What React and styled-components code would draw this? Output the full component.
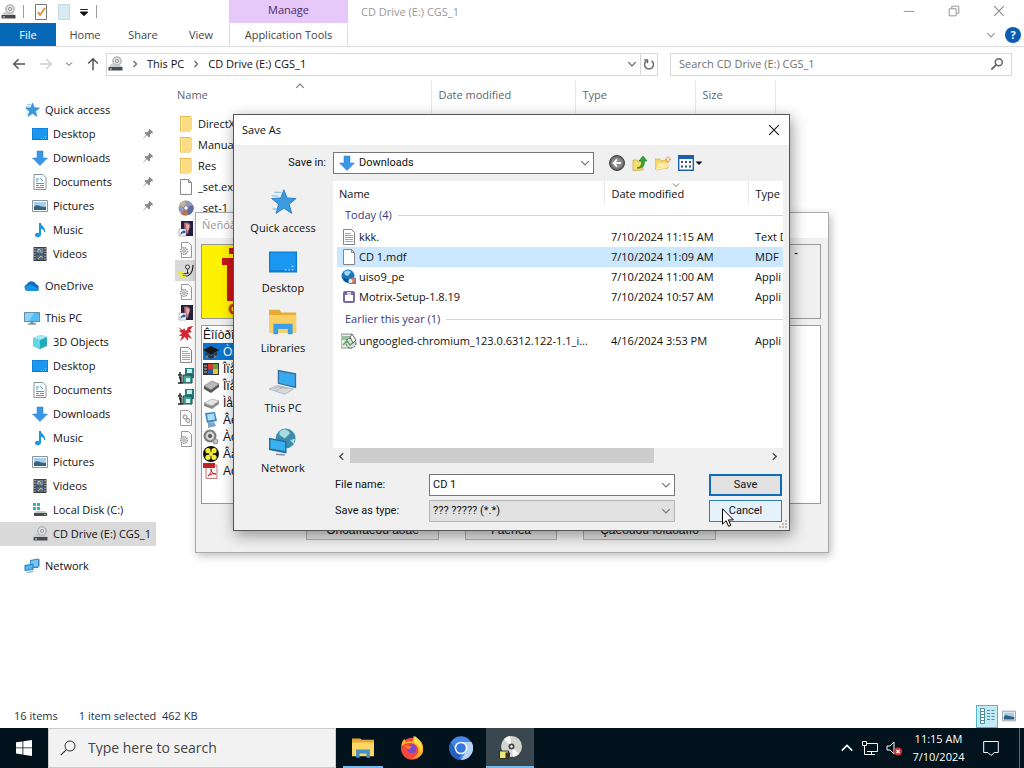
import { useState } from 'react'
import styled, { createGlobalStyle, css } from 'styled-components'

// every drawing lives on a 16x16 grid
const art = {
  star: <><path d="M8.500 1l1.800 4.700 5.200.3-4 3.300 1.500 5.200L8.500 11.500 4 14.500l1.500-5.200L1.500 6l5.200-.3z" fill="#3a9be0" stroke="#2278bd" strokeWidth=".5" /><path d="M3 2.500h4M1.500 4.500h4M2 12h2.500" stroke="#8cc6ee" strokeWidth=".8" /></>,
  desktop: <><path d="M0 2h16v12H0z" fill="#0d7bd1" /><path d="M.7 2.700h14.600v10H.7z" fill="#1c97f0" /><path d="M9 12.500h1M11 12.500h1M13 12.500h1M13 10.500h1" stroke="#9bd4fb" strokeWidth=".8" /></>,
  downloads: <path d="M5 1h6v7h4.500L8 15.500.5 8H5z" fill="#3a96e6" stroke="#2a7fca" strokeWidth=".5" />,
  document: <><path d="M2 .5h9l3 3v12H2z" fill="#fff" stroke="#8a969f" /><path d="M4 5h3M4 7h2M8 4l3 3M4 9.500h8M4 11.500h3M8 11.500h4M4 13.500h8" stroke="#4a9bd0" /></>,
  pictures: <><path d="M.5 2.500h15v11H.5z" fill="#fff" stroke="#8a969f" /><path d="M2 4h12v8H2z" fill="#a8cdea" /><path d="M2 12V9c3-4 5 0 12 0v3z" fill="#34607f" /></>,
  music: <path d="M7 1h2c0 3 5 4 4 9h-1c0-2-1-3-3-3v6c-1 3-6 3-6 .3C3 11 5 10.500 7 11z" fill="#2196dc" />,
  videos: <><path d="M1.500 1h13v14h-13z" fill="#3b3e42" /><path d="M4.500 2h7v5.500h-7z" fill="#66809c" /><path d="M4.500 8.500h7V14h-7z" fill="#3f6f9e" /><path d="M3 2v12M13 2v12" stroke="#e8e8e8" strokeDasharray="1.300 1.300" /><path d="M5 6l2-3 3 4M6 13l3-3 2 2" stroke="#d8b86a" fill="none" /></>,
  onedrive: <><path d="M3.500 13a3.500 3.500 0 01-.5-6.800A5 5 0 0112 6a3.700 3.700 0 01.5 7z" fill="#0f6cbd" /><path d="M3 13a3 3 0 01-1-5l5-1.500L15 11a2 2 0 01-2 2z" fill="#1b93e4" /></>,
  pc: <><path d="M0 2h16v10H0z" fill="#6e8ea6" /><path d="M1 3h14v8H1z" fill="#56bdf3" /><path d="M1 3h9L5 11H1z" fill="#86d5fb" /><path d="M4 14h8M7 12h2v2H7z" stroke="#8296a4" strokeWidth="1.400" /></>,
  cube: <><path d="M1 4l8-3 6 2v9l-7 3-7-3z" fill="#27a9bd" /><path d="M1 4l7 2v9l-7-3z" fill="#63d8e4" /><path d="M1 4l8-3 6 2-7 3z" fill="#a4edf1" /></>,
  disk: <><path d="M1 1h3v3H1zM5 1h3v3H5zM1 5h3v3H1zM5 5h3v3H5z" fill="#27b3c0" /><path d="M4 9h9l2 2H2z" fill="#c6cace" /><path d="M2 11h13v3H2z" fill="#464c50" /><path d="M12 12.500h2" stroke="#6fe06f" /></>,
  cd: <><circle cx="10" cy="5" r="4.200" fill="#e2e2e2" stroke="#9c9c9c" /><circle cx="10" cy="5" r="1.500" fill="#fff" stroke="#8a8a8a" /><path d="M4 8h9l2 3H2z" fill="#bfc3c5" fillOpacity=".8" /><path d="M1.500 11h14v3.500h-14z" fill="#484c50" /><path d="M3 13h2" stroke="#ddd" /></>,
  network: <><path d="M6 2l8-1.500 1.500 1V8L14 10H6z" fill="#3a86c2" /><path d="M7 3l7-1.500v7L7 9z" fill="#7cc4ee" /><path d="M.5 7l9-1.500v6.500l-9 1z" fill="#1f82c6" /><path d="M1.500 8l7-1.200v4.400l-7 .8z" fill="#54b5ed" /><path d="M3 14.500l6-1" stroke="#7591a5" /></>,
  folder: <><path d="M2 0h11v14l-1 1.500H2z" fill="#e6bd55" /><path d="M3 1h11v12l-1 2H3z" fill="#fbdc85" /><path d="M3 1h1v13H3z" fill="#fff0b8" /></>,
  page: <path d="M2.500.5h8l3 3v12h-11zM10.500.5v3h3" fill="#fff" stroke="#858585" />,
  text: <><path d="M2.500.5h8l3 3v12h-11z" fill="#fff" stroke="#858585" /><path d="M4 4.500h6M4 6.500h8M4 8.500h8M4 10.500h8M4 12.500h8" stroke="#8f8f8f" strokeWidth=".8" /></>,
  gear: <><path d="M3.500.5h7l3 3v12h-10z" fill="#fff" stroke="#9a9a9a" /><circle cx="6" cy="9" r="3.400" fill="#eee" stroke="#8c8c8c" strokeDasharray="1.500 .8" strokeWidth="1.300" /><circle cx="6" cy="9" r="1.300" fill="#fff" stroke="#999" /></>,
  gears: <><path d="M2.500.5h8l3 3v12h-11z" fill="#fff" stroke="#9a9a9a" /><circle cx="7" cy="7" r="2" fill="#eee" stroke="#8c8c8c" /><circle cx="10" cy="10.500" r="2" fill="#eee" stroke="#8c8c8c" /></>,
  discColor: <><circle cx="8" cy="8" r="7.500" fill="#9297bc" /><path d="M8 8L1 6a7 7 0 016-5.500z" fill="#c4b494" /><path d="M8 8l7-3a7 7 0 01-5 10z" fill="#5e6d9e" /><path d="M8 8L3 14a7 7 0 006 1.300z" fill="#c26d4a" /><circle cx="8" cy="8" r="2.200" fill="#fff" stroke="#7b7b9b" /></>,
  portrait: <><path d="M3 0h12v15H3z" fill="#252040" /><path d="M6 2c6-2 8 3 5 6l-1 5-3-1z" fill="#bc6f76" /><path d="M8 3l3 1v4l-2 2z" fill="#e6b3a9" /><path d="M1 8h7v7H1z" fill="#fff" stroke="#777" strokeWidth=".5" /><path d="M2.500 14c0-3 1-4 3-4V8.500L8 11l-2.500 2v-1.500z" fill="#235ab0" /></>,
  pliers: <><path d="M6 13c6 1 9-4 9-11" fill="none" stroke="#222" strokeWidth="1.200" /><circle cx="9.500" cy="4" r="2" fill="#eee" stroke="#333" /><path d="M9.500 6v5M4 11l7-1" stroke="#333" /><path d="M0 8h6v2.500H0zM2 11.500h6V14H2z" fill="#e9ee28" /><path d="M5 12.500h5" stroke="#777" /></>,
  splat: <path d="M0 1l5 3 1-2 2 3 2-4 5-1-3 4 2 2-4 1 4 6-4-2v4l-3-4-5 4 2-5-3 0 3-3-3-2 2-1z" fill="#d22735" />,
  install: <><path d="M7 0h9v10H7z" fill="#287f85" /><path d="M9 1h5v4H9z" fill="#c9f0e4" /><path d="M5 7h9v8H5z" fill="#3fa39a" stroke="#244" /><path d="M8 10h4v4H8z" fill="#d9f6ea" /><path d="M2 4v3M0 7h4M1 9h2v6M0 15h5" stroke="#222" strokeWidth="1.400" /></>,
  globe: <><circle cx="7" cy="7" r="6.500" fill="#1b78b8" /><path d="M3 3c3-2 5-2 7 0L7 7 4 6z" fill="#9fd9f5" /><path d="M2 9l5 1 1 4-4-1z" fill="#0c4c83" /><path d="M8 9h7v6H8z" fill="#6b7fa7" /><path d="M11 8l4 3-4 4z" fill="#d9785d" /><circle cx="9.500" cy="12" r="2" fill="#e5edf5" /></>,
  motrix: <><rect x="2" y="2" width="12" height="12" rx="2" fill="#7a68a0" /><path d="M4 6h8v6H4z" fill="#fff" /><path d="M6 3h4v3H6z" fill="#d9d0e6" /></>,
  chromiumSetup: <><path d="M0 1h11v14H0z" fill="#e7ede7" stroke="#6f7d72" strokeWidth=".8" /><path d="M1 3h8v4H1z" fill="#94bea1" /><circle cx="10" cy="10" r="5" fill="#dbe4dc" stroke="#39443d" strokeDasharray="2 1" /><path d="M2 12l4-4 3 4 4-3" fill="none" stroke="#5aa35a" strokeWidth="1.500" /><path d="M11 1l4 6-3 3-3-6z" fill="#f3f3f3" stroke="#444" strokeWidth=".8" /></>,
  chip: <><path d="M0 6l8-4 8 4-8 5z" fill="#191919" /><path d="M2 8v3l6 4 6-4V8l-6 4z" fill="#333" /><path d="M4 11v3M12 11v3" stroke="#d58f2e" /></>,
  winflag: <><path d="M0 2h16v12H0z" fill="#333" /><path d="M5 3h5v5H5z" fill="#cf3e2c" /><path d="M10 3h5v5h-5z" fill="#60a440" /><path d="M5 8h5v5H5z" fill="#295bb6" /><path d="M10 8h5v5h-5z" fill="#e6c536" /><path d="M1 5h3M1 8h3M1 11h3" stroke="#bbb" /></>,
  drive: <><path d="M1 8l8-5 7 3-8 6z" fill="#b9b9b9" stroke="#555" strokeWidth=".5" /><path d="M1 8l7 4v3l-7-4zM8 12l8-6v3l-8 6z" fill="#565656" /></>,
  driveLight: <><path d="M1 8l8-4 7 2-7 5z" fill="#e4e4e4" stroke="#888" strokeWidth=".5" /><path d="M1 8l8 3v3l-8-3zM9 11l7-5v3l-7 5z" fill="#8b8b8b" /></>,
  monitor: <><path d="M2 1l10-1 2 9-10 2z" fill="#4385bd" /><path d="M4 2.500l7-1 1 6-7 1z" fill="#a9def7" /><path d="M5 11l6-1 2 4-8 2z" fill="#7ba7c5" /></>,
  speaker: <><circle cx="7" cy="7" r="6.500" fill="#7a7a7a" /><circle cx="7" cy="7" r="4.400" fill="#d2d2d2" /><circle cx="7" cy="7" r="2" fill="#555" /><circle cx="12.500" cy="12.500" r="2.500" fill="#c3c3c3" stroke="#888" /></>,
  clover: <><circle cx="8" cy="8" r="8" fill="#111" /><circle cx="5" cy="4.700" r="2.600" fill="#f4ed37" /><circle cx="11" cy="4.700" r="2.600" fill="#f4ed37" /><circle cx="5" cy="11.300" r="2.600" fill="#f4ed37" /><circle cx="11" cy="11.300" r="2.600" fill="#f4ed37" /><path d="M5 5l6 6M11 5l-6 6" stroke="#f4ed37" strokeWidth="2" /></>,
  pdf: <><path d="M3 2h11v13.500H3z" fill="#f4f4f4" stroke="#a34646" strokeWidth=".7" /><path d="M0 0h12v5H0z" fill="#c4202b" /><path d="M5 13c4-4 4-7 3-7s1 5 5 5c-2-1-6 0-8 2z" fill="none" stroke="#c4202b" /></>,
  pin: <path d="M10 1l5 5-1 1-1-.4-2.500 2.500.3 2.400-1.300 1.300L6.500 9.800 2 14l-.5-.5L5.700 9 3.200 6.500l1.300-1.300 2.400.3L9.400 3 9 2z" fill="#868b90" />,
  libraries: <><path d="M0 1h6l1 1.500h8.500V14H0z" fill="#e4ac36" /><path d="M0 4h15.500v10H0z" fill="#fbd062" /><path d="M2.500 9h11v6h-2.700v-3H5.200v3H2.500z" fill="#3f9edf" /></>,
  laptop: <><path d="M5 1l10.500 2v8.500L5 9z" fill="#3a6f98" /><path d="M5.700 2l9 1.700v6.800l-9-2z" fill="#36aaf0" /><path d="M0 12l5-2 9 2-5 3z" fill="#d6dadd" stroke="#9fa8af" strokeWidth=".4" /><path d="M2.500 11.900l3-1.200 5 1.200M4 13l4-2" stroke="#9fa8af" strokeWidth=".4" fill="none" /></>,
  networkBig: <><circle cx="9.500" cy="6" r="5.700" fill="#3d8cae" /><path d="M6 2c3-2 5-1 6 1L9 6 6 4zM12 7l3-1-1 3z" fill="#a6dde2" /><path d="M0 5.500l10 2v7l-10-2z" fill="#286b9c" /><path d="M.8 6.500l8.400 1.700v5L.8 11.700z" fill="#39b0f2" /><path d="M4 15l5 .4" stroke="#8498a5" /></>,
  back: <><circle cx="8" cy="8" r="7.500" fill="#666" stroke="#444" /><circle cx="8" cy="8" r="5.800" fill="#888" /><path d="M12 8H5M8 4.500L4.500 8 8 11.500" fill="none" stroke="#fff" strokeWidth="1.800" /></>,
  upFolder: <><path d="M1 5h4l1 1h5v9l-7 .5H1z" fill="#f4dc6f" stroke="#b99a35" strokeWidth=".6" /><path d="M5 13c4-1 5-4 4.500-7H7l4-5 4 5h-2.500c0 5-2.500 8-7.500 7z" fill="#35a434" stroke="#21721f" strokeWidth=".6" /></>,
  newFolder: <><path d="M0 4h5l1 1.500h7V13l-11 2-2-1z" fill="#f7d66d" stroke="#d6a83b" strokeWidth=".6" /><path d="M3 8h11l-2 5-11 2z" fill="#fdeba6" /><path d="M13 1.500v6M10 4.500h6M11 2.500l4 4M15 2.500l-4 4" stroke="#ee8b45" /><circle cx="13" cy="4.500" r="1.300" fill="#fff2b8" /></>,
  viewMenu: <><path d="M.7.7h14.600v14.600H.7z" fill="#fff" stroke="#1c61ad" strokeWidth="1.400" /><path d="M0 0h16v4H0z" fill="#1c61ad" /><path d="M3 7h2M7 7h2M11 7h2M3 11.500h2M7 11.500h2M11 11.500h2" stroke="#3d5168" strokeWidth="2" /></>,
  check: <><path d="M2.500.5h11v15h-11z" fill="#fff" stroke="#777" /><path d="M5 8l2 3 5-7" fill="none" stroke="#e08b37" strokeWidth="1.800" /></>,
  pale: <path d="M2.500.5h11v15h-11z" fill="#d9eaf3" stroke="#c5dae5" />,
  explorer: <><path d="M0 1h6l1 1h9v11H0z" fill="#e5a93a" /><path d="M0 4h16v10H0z" fill="#fbd765" /><path d="M3 9h10v6h-2.500v-3h-5v3H3z" fill="#4590c5" /></>,
  firefox: <><circle cx="8" cy="8.500" r="7.300" fill="#f5483d" /><path d="M1 7C1 4 2 3 3 2l1 2c2-1 3-1 4 0l2-4c4 3 5.500 5 5.500 9S12 15 8 15c5-2 6-7 1-10-4-1-6 0-8 2z" fill="#ffae28" /><path d="M9 0c5 3 7 7 5 11-1-4-3-6-5-7z" fill="#ffe14d" /><circle cx="8" cy="8.500" r="3" fill="#7a4ad0" /><path d="M3 7c2-2 4 0 5 0L6 9z" fill="#ff7b2d" /></>,
  chromium: <><circle cx="8" cy="8" r="7.800" fill="#4687e8" /><path d="M8 4h7a8 8 0 01-7 12l3.500-6z" fill="#b5d2fb" /><path d="M1.200 4L5 10l3 2-1 4A8 8 0 011.200 4z" fill="#2862bd" /><circle cx="8" cy="8" r="4.200" fill="#fff" /><circle cx="8" cy="8" r="3.200" fill="#3578e2" /></>,
  setupDisc: <><circle cx="9" cy="7" r="7" fill="#d3d3cf" /><path d="M9 7L4 2a7 7 0 014-2zM9 7l5 5a7 7 0 01-4 2z" fill="#f8f8f8" /><circle cx="9" cy="7" r="2" fill="#444" /><circle cx="9" cy="7" r=".8" fill="#fff" /><path d="M1 10h6v5H1z" fill="#ece976" stroke="#222" strokeWidth=".6" /><path d="M5 11h3v3l-3 1z" fill="#333" /></>,
  windows: <path d="M0 2.300l6.500-.9v6.100H0zM7.300 1.300L16 0v7.500H7.300zM0 8.300h6.500v6.100L0 13.500zM7.300 8.300H16V16l-8.700-1.300z" fill="#fff" />,
  search: <><circle cx="10" cy="6" r="5" fill="none" stroke="currentColor" /><path d="M6.400 9.600L.8 15.200" stroke="currentColor" strokeWidth="1.200" /></>,
  find: <><circle cx="10" cy="6" r="4" fill="none" stroke="currentColor" strokeWidth="1.700" /><path d="M7 9l-5.500 5.500" stroke="currentColor" strokeWidth="2.200" /></>,
  left: <path d="M15 8H2M7.500 2.500L2 8l5.500 5.500" fill="none" stroke="currentColor" strokeWidth="1.700" />,
  right: <path d="M1 8h13M8.500 2.500L14 8l-5.500 5.500" fill="none" stroke="currentColor" strokeWidth="1.700" />,
  up: <path d="M8 15V2M2.500 7.500L8 2l5.500 5.500" fill="none" stroke="currentColor" strokeWidth="1.700" />,
  chevDown: <path d="M2 5l6 6 6-6" fill="none" stroke="currentColor" strokeWidth="2" />,
  chevUp: <path d="M2 11l6-6 6 6" fill="none" stroke="currentColor" strokeWidth="1.800" />,
  chevRight: <path d="M5 2l6 6-6 6" fill="none" stroke="currentColor" strokeWidth="2.500" />,
  chevLeft: <path d="M11 2L5 8l6 6" fill="none" stroke="currentColor" strokeWidth="2.500" />,
  caret: <path d="M1 5h14l-7 7z" fill="currentColor" />,
  customize: <path d="M2 4h12M2 8h12l-6 6z" fill="currentColor" stroke="currentColor" strokeWidth="1.500" />,
  refresh: <path d="M11.500 3.800a6 6 0 11-7 0M1.500 2.500h4.500v4.500" fill="none" stroke="currentColor" strokeWidth="1.900" />,
  min: <path d="M2 8.500h12" stroke="currentColor" />,
  restore: <path d="M2.500 5.500h8v8h-8zM5.500 5V2.500h8v8H11" fill="none" stroke="currentColor" />,
  close: <path d="M2.500 2.500l11 11M13.500 2.500l-11 11" stroke="currentColor" strokeWidth="1.200" />,
  details: <><path d="M1.500.5h4v15h-4z" fill="#fff" stroke="#4f8d9a" /><path d="M1.500 3.500h4M1.500 6.500h4M1.500 9.500h4M1.500 12.500h4M8 2.500h3M8 5.500h3M8 8.500h3M8 11.500h3M12.500 2.500h3M12.500 5.500h3M12.500 8.500h3M12.500 11.500h3" stroke="#4f8d9a" /></>,
  lan: <path d="M4 3.500h11.500v8H5M9.500 11.500v3M6 14.500h7M.5 1.500h4v4h-4zM2.500 5.500v9h4" fill="none" stroke="#fff" />,
  muted: <><path d="M1 6h3l4-4v12l-4-4H1z" fill="none" stroke="#fff" /><circle cx="12" cy="11.500" r="4" fill="#d13438" /><path d="M10.500 10l3 3M13.500 10l-3 3" stroke="#fff" strokeWidth="1.200" /></>,
  notice: <path d="M.7 1.500h14.600v11h-4L8 15.500l-3-3H.7z" fill="none" stroke="#fff" />
}

function Icon({ name, size = 16 }) {
  return <Glyph viewBox="0 0 16 16" width={size} height={size} aria-hidden="true">{art[name]}</Glyph>
}

const quickAccess = [
  ['desktop', 'Desktop', true],
  ['downloads', 'Downloads', true],
  ['document', 'Documents', true],
  ['pictures', 'Pictures', true],
  ['music', 'Music'],
  ['videos', 'Videos']
]

const thisPc = [
  ['cube', '3D Objects'],
  ['desktop', 'Desktop'],
  ['document', 'Documents'],
  ['downloads', 'Downloads'],
  ['music', 'Music'],
  ['pictures', 'Pictures'],
  ['videos', 'Videos'],
  ['disk', 'Local Disk (C:)'],
  ['cd', 'CD Drive (E:) CGS_1']
]

const driveFiles = [
  ['folder', 'DirectX'],
  ['folder', 'Manual'],
  ['folder', 'Res'],
  ['page', '_set.exe'],
  ['discColor', '_set-1'],
  ['portrait', ''],
  ['gear', ''],
  ['pliers', ''],
  ['gear', ''],
  ['portrait', ''],
  ['splat', ''],
  ['text', ''],
  ['install', ''],
  ['install', ''],
  ['gears', ''],
  ['gear', '']
]

const setupItems = [
  ['chip', 'Òå'],
  ['winflag', 'Îïå'],
  ['drive', 'Îïå'],
  ['driveLight', 'Ìåí'],
  ['monitor', 'Âè'],
  ['speaker', 'Àó'],
  ['clover', 'Âå'],
  ['pdf', 'Ac']
]

const groups = [
  {
    title: 'Today (4)',
    files: [
      ['text', 'kkk.', '7/10/2024 11:15 AM', 'Text D'],
      ['page', 'CD 1.mdf', '7/10/2024 11:09 AM', 'MDF'],
      ['globe', 'uiso9_pe', '7/10/2024 11:00 AM', 'Appli'],
      ['motrix', 'Motrix-Setup-1.8.19', '7/10/2024 10:57 AM', 'Appli']
    ]
  },
  {
    title: 'Earlier this year (1)',
    files: [
      ['chromiumSetup', 'ungoogled-chromium_123.0.6312.122-1.1_i...', '4/16/2024 3:53 PM', 'Appli']
    ]
  }
]

const places = [
  ['star', 'Quick access'],
  ['desktop', 'Desktop'],
  ['libraries', 'Libraries'],
  ['laptop', 'This PC'],
  ['networkBig', 'Network']
]

function NavRow({ icon, label, root, pinned, active }) {
  return (
    <NavLink href="#" $root={root} $active={active}>
      <Icon name={icon} />
      <span>{label}</span>
      {pinned && <Icon name="pin" size={12} />}
    </NavLink>
  )
}

function Explorer() {
  return (
    <ExplorerWindow>
      <TitleBar>
        <QuickTools>
          <Icon name="cd" />
          <Divider />
          <Icon name="check" />
          <Icon name="pale" />
          <Icon name="customize" size={10} />
          <Divider />
        </QuickTools>
        <ContextTab>Manage</ContextTab>
        <WindowTitle>CD Drive (E:) CGS_1</WindowTitle>
        <Caption aria-label="Minimize"><Icon name="min" size={14} /></Caption>
        <Caption aria-label="Restore"><Icon name="restore" size={14} /></Caption>
        <Caption aria-label="Close"><Icon name="close" size={14} /></Caption>
      </TitleBar>
      <Ribbon>
        <FileTab>File</FileTab>
        <Tab>Home</Tab>
        <Tab>Share</Tab>
        <Tab>View</Tab>
        <ToolsTab>Application Tools</ToolsTab>
        <RibbonEnd>
          <Icon name="chevDown" size={10} />
          <Help aria-label="Help">?</Help>
        </RibbonEnd>
      </Ribbon>
      <AddressRow>
        <History>
          <PlainButton aria-label="Back"><Icon name="left" size={14} /></PlainButton>
          <PlainButton aria-label="Forward" disabled><Icon name="right" size={14} /></PlainButton>
          <PlainButton aria-label="Recent"><Icon name="chevDown" size={8} /></PlainButton>
          <PlainButton aria-label="Up"><Icon name="up" size={14} /></PlainButton>
        </History>
        <Address>
          <Icon name="cd" />
          <Icon name="chevRight" size={8} />
          <Crumb href="#">This PC</Crumb>
          <Icon name="chevRight" size={8} />
          <Crumb href="#">CD Drive (E:) CGS_1</Crumb>
          <AddressEnd>
            <Icon name="chevDown" size={10} />
            <Refresh aria-label="Refresh"><Icon name="refresh" size={12} /></Refresh>
          </AddressEnd>
        </Address>
        <SearchBox>
          <input aria-label="Search" placeholder="Search CD Drive (E:) CGS_1" />
          <Icon name="find" size={14} />
        </SearchBox>
      </AddressRow>
      <Content>
        <Nav>
          <NavGroup>
            <NavRow root icon="star" label="Quick access" />
            {quickAccess.map(([icon, label, pinned]) => (
              <NavRow key={label} icon={icon} label={label} pinned={pinned} />
            ))}
          </NavGroup>
          <NavGroup>
            <NavRow root icon="onedrive" label="OneDrive" />
          </NavGroup>
          <NavGroup>
            <NavRow root icon="pc" label="This PC" />
            {thisPc.map(([icon, label]) => (
              <NavRow key={label} icon={icon} label={label} active={icon === 'cd'} />
            ))}
          </NavGroup>
          <NavGroup>
            <NavRow root icon="network" label="Network" />
          </NavGroup>
        </Nav>
        <DriveTable>
          <colgroup>
            <col width="262" /><col width="144" /><col width="120" /><col width="80" /><col />
          </colgroup>
          <thead>
            <tr>
              <th>Name<SortMark><Icon name="chevUp" size={10} /></SortMark></th>
              <th>Date modified</th>
              <th>Type</th>
              <th>Size</th>
              <td />
            </tr>
          </thead>
          <tbody>
            {driveFiles.map(([icon, name], i) => (
              <DriveRow key={i} $selected={icon === 'pliers'}>
                <td><FileName><Icon name={icon} />{name}</FileName></td>
                <td colSpan={4} />
              </DriveRow>
            ))}
          </tbody>
        </DriveTable>
      </Content>
      <StatusBar>
        <span>16 items</span>
        <span>1 item selected&nbsp; 462 KB</span>
        <ViewModes>
          <ViewMode $on aria-label="Details"><Icon name="details" /></ViewMode>
          <ViewMode aria-label="Large icons"><Icon name="pictures" size={14} /></ViewMode>
        </ViewModes>
      </StatusBar>
    </ExplorerWindow>
  )
}

function Setup() {
  return (
    <SetupWindow>
      <SetupTitle>Ñeñóàíà</SetupTitle>
      <SetupBody>
        <Banner>
          <Logo viewBox="0 0 70 73" aria-hidden="true">
            <path d="M0 0h70v73H0z" fill="#fff200" />
            <path d="M27 3h12v6H27zM20 13h19v43H25V20h-5z" fill="#c91518" />
            <circle cx="32" cy="64" r="4" fill="none" stroke="#c94118" strokeWidth="3" />
          </Logo>
          <BannerText>-</BannerText>
        </Banner>
        <SetupList>
          <li>Êîíòðîë</li>
          {setupItems.map(([icon, label], i) => (
            <SetupItem key={i} $selected={i === 0}>
              <Icon name={icon} />
              <span>{label}</span>
            </SetupItem>
          ))}
        </SetupList>
        <SetupButtons>
          <WideButton>Óñòàíîâèòü äðàé</WideButton>
          <ShortButton>Î äèñêå</ShortButton>
          <WideButton>Çàêðûòü ïðîãðàììó</WideButton>
        </SetupButtons>
      </SetupBody>
    </SetupWindow>
  )
}

function SaveAs() {
  const [selected, setSelected] = useState('CD 1.mdf')
  const [fileName, setFileName] = useState('CD 1')

  return (
    <Dialog role="dialog" aria-label="Save As">
      <DialogTitle>
        Save As
        <DialogClose aria-label="Close dialog"><Icon name="close" size={14} /></DialogClose>
      </DialogTitle>
      <DialogBody>
        <SaveInLabel htmlFor="save-in">Save in:</SaveInLabel>
        <SaveInRow>
          <Combo $wide>
            <Icon name="downloads" />
            <select id="save-in"><option>Downloads</option></select>
            <Icon name="chevDown" size={10} />
          </Combo>
          <DialogTools>
            <PlainButton aria-label="Go back"><Icon name="back" /></PlainButton>
            <PlainButton aria-label="Up one level"><Icon name="upFolder" /></PlainButton>
            <PlainButton aria-label="New folder"><Icon name="newFolder" /></PlainButton>
            <PlainButton aria-label="View menu"><Icon name="viewMenu" /><Icon name="caret" size={8} /></PlainButton>
          </DialogTools>
        </SaveInRow>
        <Places>
          {places.map(([icon, label]) => (
            <Place key={label}>
              <Icon name={icon} size={28} />
              {label}
            </Place>
          ))}
        </Places>
        <div>
          <FilePane>
            <FileTable>
              <colgroup>
                <col width="271" /><col width="144" /><col />
              </colgroup>
              <thead>
                <tr>
                  <th>Name</th>
                  <th>Date modified<SortMark><Icon name="chevDown" size={8} /></SortMark></th>
                  <th>Type</th>
                </tr>
              </thead>
              {groups.map(group => (
                <tbody key={group.title}>
                  <tr>
                    <GroupCell colSpan={3}><GroupTitle>{group.title}</GroupTitle></GroupCell>
                  </tr>
                  {group.files.map(([icon, name, date, type]) => (
                    <FileRow key={name} $selected={selected === name} onClick={() => setSelected(name)}>
                      <td><FileName $tight><Icon name={icon} /><span>{name}</span></FileName></td>
                      <td>{date}</td>
                      <td>{type}</td>
                    </FileRow>
                  ))}
                </tbody>
              ))}
            </FileTable>
          </FilePane>
          <ScrollBar>
            <ScrollButton aria-label="Scroll left"><Icon name="chevLeft" size={9} /></ScrollButton>
            <Track><Thumb /></Track>
            <ScrollButton aria-label="Scroll right"><Icon name="chevRight" size={9} /></ScrollButton>
          </ScrollBar>
          <Form>
            <label htmlFor="file-name">File name:</label>
            <Combo>
              <input id="file-name" value={fileName} onChange={e => setFileName(e.target.value)} />
              <Icon name="chevDown" size={10} />
            </Combo>
            <DialogButton $primary>Save</DialogButton>
            <label htmlFor="file-type">Save as type:</label>
            <Combo $grey>
              <select id="file-type"><option>??? ????? (*.*)</option></select>
              <Icon name="chevDown" size={10} />
            </Combo>
            <DialogButton>Cancel</DialogButton>
          </Form>
        </div>
      </DialogBody>
      <Grip viewBox="0 0 10 10" aria-hidden="true">
        <path d="M7 1h2v2H7zM7 4h2v2H7zM4 4h2v2H4zM7 7h2v2H7zM4 7h2v2H4zM1 7h2v2H1z" fill="#bdbdbd" />
      </Grip>
    </Dialog>
  )
}

function Taskbar() {
  return (
    <Bar>
      <StartButton aria-label="Start"><Icon name="windows" /></StartButton>
      <TaskSearch>
        <Icon name="search" />
        <input aria-label="Type here to search" placeholder="Type here to search" />
      </TaskSearch>
      <Apps>
        <AppButton $open aria-label="File Explorer"><Icon name="explorer" size={22} /></AppButton>
        <AppButton aria-label="Firefox"><Icon name="firefox" size={24} /></AppButton>
        <AppButton aria-label="Chromium"><Icon name="chromium" size={24} /></AppButton>
        <AppButton $open $active aria-label="Setup"><Icon name="setupDisc" size={24} /></AppButton>
      </Apps>
      <Tray>
        <Icon name="chevUp" size={14} />
        <Icon name="lan" />
        <Icon name="muted" />
        <Clock>
          <span>11:15 AM</span>
          <span>7/10/2024</span>
        </Clock>
        <Icon name="notice" />
      </Tray>
      <ShowDesktop aria-label="Show desktop" />
    </Bar>
  )
}

export default function App() {
  return (
    <Screen>
      <GlobalStyle />
      <Explorer />
      <Setup />
      <SaveAs />
      <Taskbar />
      <Cursor viewBox="0 0 12 19" aria-hidden="true">
        <path d="M.5.8v15.400l3.600-3.500 2.500 5.600 2.200-1-2.400-5.400h5z" fill="#fff" stroke="#000" />
      </Cursor>
    </Screen>
  )
}

const GlobalStyle = createGlobalStyle`
  * { box-sizing: border-box; }
  body {
    margin: 0;
    overflow: hidden;
    background: #fff;
    color: #111;
    font: 11px/16px "Open Sans", "Noto Sans", sans-serif;
  }
  button, input, select {
    margin: 0;
    padding: 0;
    border: 0;
    border-radius: 0;
    background: none;
    color: inherit;
    font: inherit;
    outline: 0;
  }
  select { appearance: none; }
  a { color: inherit; text-decoration: none; }
  table { border-collapse: collapse; table-layout: fixed; }
  th, td { padding: 0; font-weight: 400; text-align: left; white-space: nowrap; overflow: hidden; }
`

const Screen = styled.div`
  position: relative;
  display: flex;
  flex-direction: column;
  height: 100vh;
  overflow: hidden;
`

const Glyph = styled.svg`
  flex: none;
  display: block;
`

const ExplorerWindow = styled.main`
  flex: 1;
  min-height: 0;
  display: flex;
  flex-direction: column;
`

const TitleBar = styled.header`
  display: flex;
  height: 23px;
  padding-right: 3px;
`

const QuickTools = styled.div`
  flex: 0 0 229px;
  display: flex;
  align-items: center;
  gap: 7px;
`

const Divider = styled.span`
  width: 1px;
  height: 13px;
  margin-right: 2px;
  background: #999;
`

const ContextTab = styled.div`
  flex: 0 0 119px;
  background: #e6c8fb;
  color: #4b2a63;
  line-height: 20px;
  text-align: center;
`

const WindowTitle = styled.div`
  flex: 1;
  padding-left: 13px;
  color: #999;
  line-height: 23px;
`

const Caption = styled.button`
  flex: 0 0 45px;
  display: flex;
  align-items: center;
  justify-content: center;
  height: 21px;
  color: #888;
`

const DialogClose = styled(Caption)`
  flex-basis: 30px;
  color: #111;
`

const Ribbon = styled.nav`
  display: flex;
  height: 24px;
  border-bottom: 1px solid #dcdcdc;
`

const Tab = styled.button`
  flex: 0 0 58px;
  line-height: 23px;
  color: #444;
`

const FileTab = styled(Tab)`
  flex-basis: 56px;
  background: #0768b8;
  color: #fff;
`

const ToolsTab = styled(Tab)`
  flex-basis: 119px;
  margin-left: -1px;
  border: solid #e3d8ea;
  border-width: 0 1px;
`

const RibbonEnd = styled.div`
  display: flex;
  align-items: center;
  gap: 9px;
  margin-left: auto;
  padding-right: 3px;
  color: #999;
`

const Help = styled.button`
  width: 16px;
  height: 16px;
  border-radius: 50%;
  background: #0a5cb4;
  color: #fff;
  font-weight: 700;
  line-height: 16px;
`

const AddressRow = styled.div`
  display: flex;
  align-items: center;
  height: 34px;
  padding-right: 12px;
`

const History = styled.div`
  flex: 0 0 106px;
  display: flex;
  align-items: center;
  justify-content: space-between;
  padding: 0 6px 0 12px;
  color: #555;
`

const PlainButton = styled.button`
  display: flex;
  align-items: center;
  gap: 1px;

  &:disabled { color: #ccc; }
`

const Address = styled.div`
  flex: 550 1 0;
  display: flex;
  align-items: center;
  height: 23px;
  gap: 8px;
  border: 1px solid #d9d9d9;
  color: #666;
`

const Crumb = styled.a`
  color: #111;
`

const AddressEnd = styled.div`
  display: flex;
  align-items: center;
  align-self: stretch;
  gap: 3px;
  margin-left: auto;
`

const Refresh = styled.button`
  display: flex;
  align-items: center;
  align-self: stretch;
  width: 17px;
  padding-left: 2px;
  border-left: 1px solid #d9d9d9;
`

const SearchBox = styled.div`
  flex: 325 1 0;
  display: flex;
  align-items: center;
  height: 23px;
  margin-left: 12px;
  padding: 0 7px 0 8px;
  border: 1px solid #d9d9d9;
  color: #666;

  input { flex: 1; min-width: 0; }
  input::placeholder { color: #707070; opacity: 1; }
`

const Content = styled.div`
  flex: 1;
  min-height: 0;
  display: flex;
  align-items: flex-start;
  overflow: hidden;
`

const Nav = styled.nav`
  flex: 0 0 169px;
  display: flex;
  flex-direction: column;
  gap: 8px;
  padding: 17px 13px 0 0;
`

const NavGroup = styled.div`
  display: flex;
  flex-direction: column;
`

const NavLink = styled.a`
  display: flex;
  align-items: center;
  gap: 5px;
  height: 24px;
  padding-left: ${props => props.$root ? '24px' : '32px'};
  padding-right: 2px;
  background: ${props => props.$active ? '#d9d9d9' : 'transparent'};
  white-space: nowrap;

  span { flex: 1; }
`

const DriveTable = styled.table`
  flex: 1;
  width: 100%;

  thead { height: 32px; color: #5d6670; }
  th {
    position: relative;
    padding: 0 6px 4px 7px;
    border-right: 1px solid #e5e5e5;
  }
  th:first-child { padding-left: 8px; }
`

const SortMark = styled.span`
  position: absolute;
  inset: 0 0 auto;
  display: flex;
  justify-content: center;
  color: #777;
`

const DriveRow = styled.tr`
  height: 21px;

  td:first-child { padding-left: 6px; }
  td > div { background: ${props => props.$selected ? '#d9d9d9' : 'transparent'}; }
`

const FileName = styled.div`
  display: flex;
  align-items: center;
  gap: ${props => props.$tight ? '2px' : '4px'};
  height: ${props => props.$tight ? '20px' : '21px'};
  padding-left: ${props => props.$tight ? '0' : '3px'};
`

const StatusBar = styled.footer`
  display: flex;
  align-items: center;
  gap: 21px;
  height: 24px;
  padding-left: 14px;
  color: #1e3347;
`

const ViewModes = styled.div`
  display: flex;
  margin-left: auto;
  padding-right: 4px;
`

const ViewMode = styled.button`
  display: flex;
  align-items: center;
  justify-content: center;
  width: 22px;
  height: 23px;
  ${props => props.$on && css`
    background: #c3ebf5;
    border: 1px solid #54b6cb;
  `}
`

const windowFrame = css`
  position: absolute;
  display: flex;
  flex-direction: column;
  background: #f0f0f0;
`

const SetupWindow = styled.section`
  ${windowFrame}
  left: 195px;
  top: 212px;
  width: 634px;
  border: 1px solid #aaa;
  box-shadow: 2px 3px 8px rgba(0, 0, 0, 0.25);
`

const SetupTitle = styled.div`
  height: 25px;
  padding-left: 6px;
  background: #fff;
  color: #999;
  line-height: 24px;
`

const SetupBody = styled.div`
  padding: 6px 7px 12px 5px;
  font: 12px/16px "Liberation Sans", Arial, sans-serif;
`

const Banner = styled.div`
  display: flex;
  justify-content: space-between;
  height: 75px;
  border: 1px solid #999;
`

const Logo = styled.svg`
  height: 73px;
`

const BannerText = styled.span`
  padding-right: 22px;
`

const SetupList = styled.ul`
  height: 179px;
  margin: 6px 0 0;
  padding: 1px 0 0 1px;
  border: 1px solid #999;
  background: #fff;
  list-style: none;
`

const SetupItem = styled.li`
  display: flex;
  align-items: center;
  gap: 4px;
  width: 80%;
  height: 17px;
  background: ${props => props.$selected ? '#0a74d0' : 'transparent'};
  color: ${props => props.$selected ? '#fff' : '#111'};
`

const SetupButtons = styled.div`
  display: flex;
  justify-content: center;
  gap: 26px;
  padding-top: 14px;
`

const WideButton = styled.button`
  width: 133px;
  height: 22px;
  padding-top: 1px;
  border: 1px solid #adadad;
  background: #e4e4e4;
`

const ShortButton = styled(WideButton)`
  width: 92px;
`

const Dialog = styled.section`
  ${windowFrame}
  left: 233px;
  top: 114px;
  width: 557px;
  border: 1px solid #555;
  box-shadow: 2px 4px 14px rgba(0, 0, 0, 0.4);
`

const DialogTitle = styled.div`
  display: flex;
  align-items: center;
  justify-content: space-between;
  height: 30px;
  padding-left: 8px;
  background: #fff;
`

const DialogBody = styled.div`
  display: grid;
  grid-template-columns: 86px 1fr;
  grid-template-rows: 36px auto;
  column-gap: 7px;
  padding: 0 6px 8px;
`

const dialogFont = css`
  font-family: Roboto, sans-serif;
  font-size: 11px;
`

const SaveInLabel = styled.label`
  ${dialogFont}
  align-self: center;
  text-align: right;
`

const SaveInRow = styled.div`
  display: flex;
  align-items: center;
  gap: 15px;
`

const Combo = styled.div`
  ${dialogFont}
  display: flex;
  align-items: center;
  gap: 4px;
  width: ${props => props.$wide ? '261px' : 'auto'};
  height: 22px;
  padding: 0 3px;
  border: 1px solid ${props => props.$grey ? '#b5b5b5' : '#777'};
  background: ${props => props.$grey ? '#e1e1e1' : '#fff'};
  color: #777;

  input, select { flex: 1; min-width: 0; color: #111; }
  ${props => props.$wide && 'padding-left: 5px;'}
`

const DialogTools = styled.div`
  display: flex;
  gap: 7px;
`

const Places = styled.nav`
  display: flex;
  flex-direction: column;
  padding-top: 7px;
`

const Place = styled.button`
  display: flex;
  flex-direction: column;
  align-items: center;
  gap: 4px;
  height: 60px;
`

const FilePane = styled.div`
  height: 267px;
  background: #fff;
  overflow: hidden;
`

const FileTable = styled.table`
  width: 100%;

  th {
    position: relative;
    height: 22px;
    padding: 3px 0 0 7px;
    border-right: 1px solid #e5e5e5;
  }
  th:first-child { padding-left: 6px; }
  th:last-child { border-right: 0; }
`

const GroupCell = styled.td`
  height: 24px;
`

const GroupTitle = styled.div`
  display: flex;
  align-items: center;
  gap: 6px;
  padding-left: 12px;
  color: #38387f;

  &::after {
    content: '';
    flex: 1;
    height: 1px;
    background: #d4d4d8;
  }
`

const FileRow = styled.tr`
  height: 20px;
  background: linear-gradient(${props => props.$selected ? '#cce8ff, #cce8ff' : '#fff, #fff'}) 4px 0 no-repeat;

  td { padding-left: 7px; }
  td:first-child { padding: 0 8px; }
`

const ScrollBar = styled.div`
  display: flex;
  height: 16px;
`

const ScrollButton = styled.button`
  display: flex;
  align-items: center;
  justify-content: center;
  width: 17px;
  color: #444;
`

const Track = styled.div`
  flex: 1;
`

const Thumb = styled.div`
  width: 73%;
  height: 15px;
  background: #cdcdcd;
`

const Form = styled.div`
  ${dialogFont}
  display: grid;
  grid-template-columns: 94px 1fr 73px;
  align-items: center;
  row-gap: 4px;
  padding: 10px 1px 0 2px;

  > div { margin-right: 34px; }
`

const DialogButton = styled.button`
  height: 22px;
  border: ${props => props.$primary ? '2px solid #0f6cb8' : '1px solid #2f7fb8'};
  background: ${props => props.$primary ? '#e1e1e1' : '#e5f1fb'};
`

const Grip = styled.svg`
  position: absolute;
  right: 1px;
  bottom: 1px;
  width: 10px;
`

const Bar = styled.footer`
  flex: none;
  display: flex;
  height: 40px;
  background: #02131d;
  color: #fff;
`

const StartButton = styled.button`
  display: flex;
  align-items: center;
  justify-content: center;
  width: 48px;
`

const TaskSearch = styled.div`
  flex: 0 0 288px;
  display: flex;
  align-items: center;
  gap: 12px;
  padding-left: 11px;
  border: 1px solid #ccc;
  background: #f2f2f2;
  color: #333;
  font-size: 14px;

  input { flex: 1; }
  input::placeholder { color: #444; opacity: 1; }
`

const Apps = styled.div`
  display: flex;
  gap: 1px;
  padding-left: 3px;
`

const AppButton = styled.button`
  position: relative;
  display: flex;
  align-items: center;
  justify-content: center;
  width: 48px;
  background: ${props => props.$active ? '#3a474f' : 'transparent'};

  &::after {
    content: '';
    position: absolute;
    inset: auto ${props => props.$active ? '0' : '4px'} 0;
    height: 2px;
    background: ${props => props.$open ? '#76b9ed' : 'transparent'};
  }
`

const Tray = styled.div`
  display: flex;
  align-items: center;
  gap: 8px;
  margin-left: auto;
`

const Clock = styled.time`
  display: flex;
  flex-direction: column;
  align-items: center;
  width: 57px;
  margin-right: 8px;
  line-height: 18px;
`

const ShowDesktop = styled.button`
  width: 5px;
  margin-left: 20px;
  border-left: 1px solid #5d6b73;
`

const Cursor = styled.svg`
  position: absolute;
  left: 722px;
  top: 508px;
  width: 12px;
  pointer-events: none;
`
